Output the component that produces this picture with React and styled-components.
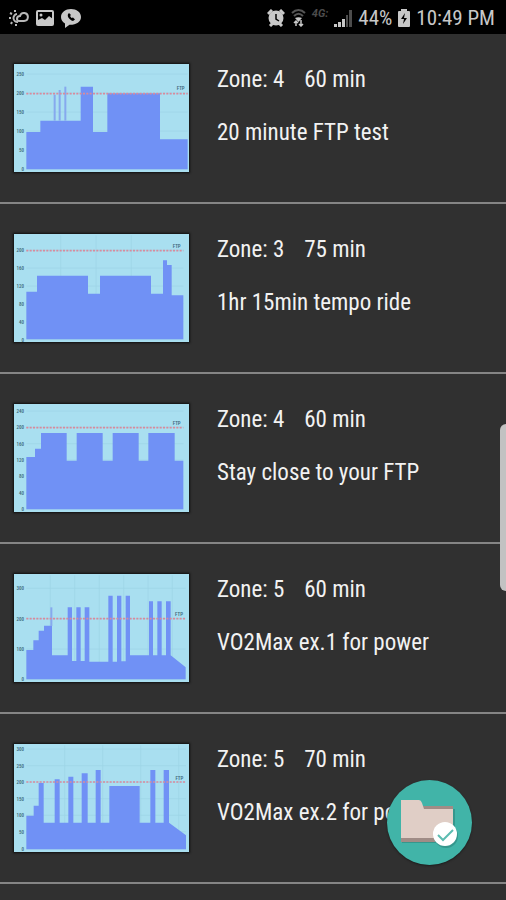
import React from 'react';
import styled, { createGlobalStyle } from "styled-components";

const GlobalStyle = createGlobalStyle`
    *, *::before, *::after {
        box-sizing: border-box;
    }
    body {
        margin: 0;
        background-color: #303030;
        color: #f2f2f2;
        font-family: "Roboto Condensed", Roboto, "Liberation Sans", sans-serif;
    }
`;

const Screen = styled.div`
    height: 100vh;
    display: flex;
    flex-direction: column;
    overflow: hidden;
`;

const StatusBar = styled.header`
    height: 34px;
    flex: none;
    display: flex;
    justify-content: space-between;
    align-items: center;
    padding: 2px 11px 0 9px;
    background-color: #000;
    color: #c8c8c8;
    font-size: 21px;
    line-height: 24px;
`;

const StatusGroup = styled.div`
    display: flex;
    align-items: center;
    gap: ${(props) => props.$gap}px;
`;

const StatusText = styled.span`
    white-space: nowrap;
`;

const StatusIcon = styled.svg`
    display: block;
    flex: none;
`;

const ListArea = styled.main`
    flex: 1;
    min-height: 0;
    position: relative;
`;

const WorkoutList = styled.ul`
    height: 100%;
    margin: 0;
    padding: 0;
    list-style: none;
    overflow: hidden;
`;

const WorkoutRow = styled.li`
    height: 170px;
    display: flex;
    align-items: flex-start;
    gap: 28px;
    padding: 30px 14px 0;
    border-bottom: 2px solid #858585;
`;

const Thumbnail = styled.svg`
    display: block;
    flex: none;
    width: 175px;
    height: 108px;
    background-color: #a9dff0;
    box-shadow: 0 0 2px 1px #101010;
`;

const ChartLabel = styled.text`
    font-size: 15px;
    font-weight: 500;
    fill: #3c6678;
    text-anchor: end;
    dominant-baseline: central;
`;

const Details = styled.div`
    min-width: 0;
    padding-top: 1px;
    font-size: 23px;
    line-height: 29px;
    white-space: nowrap;
`;

const Meta = styled.div`
    display: flex;
    gap: 20px;
`;

const Title = styled.p`
    margin: 24px 0 0;
`;

const ScrollThumb = styled.div`
    position: absolute;
    top: 45%;
    right: 0;
    width: 6px;
    height: 167px;
    border-radius: 6px 0 0 6px;
    background-color: #c2c2c2;
`;

const FolderButton = styled.button`
    position: fixed;
    right: 34px;
    bottom: 35px;
    width: 85px;
    height: 85px;
    padding: 0;
    border: 0;
    border-radius: 50%;
    background-color: #41b4a8;
    box-shadow: 0 1px 2px #1c1c1c;
    cursor: pointer;

    svg {
        display: block;
    }
`;

const BASE = 316;
const LEFT = 37;

// steps are [x, top] pairs, each one runs until the next x
const workouts = [
    {
        zone: 4,
        minutes: 60,
        title: "20 minute FTP test",
        steps: [[37, 204], [79, 170], [200, 68], [237, 204], [280, 88], [438, 226]],
        thin: [[119, 92, 78], [134, 78, 92], [151, 68, 102]],
        end: [521, 226],
        ftp: 89,
        ftpLabel: [512, 72],
        axis: [[250, 30], [200, 87], [150, 144], [100, 201], [50, 258], [0, 315]],
        columns: [],
    },
    {
        zone: 3,
        minutes: 75,
        title: "1hr 15min tempo ride",
        steps: [[37, 173], [69, 125], [222, 179], [258, 125], [411, 179], [447, 79], [459, 93], [473, 184]],
        end: [508, 184],
        ftp: 50,
        ftpLabel: [500, 35],
        axis: [[200, 49], [160, 102], [120, 156], [80, 209], [40, 263], [0, 317]],
        columns: [140, 246, 352],
    },
    {
        zone: 4,
        minutes: 60,
        title: "Stay close to your FTP",
        steps: [[37, 159], [63, 134], [81, 87], [158, 170], [188, 87], [266, 170], [296, 87], [374, 170], [403, 87], [482, 170]],
        end: [508, 170],
        ftp: 71,
        ftpLabel: [500, 58],
        axis: [[240, 21], [200, 70], [160, 119], [120, 168], [80, 217], [40, 266], [0, 315]],
        columns: [],
    },
    {
        zone: 5,
        minutes: 60,
        title: "VO2Max ex.1 for power",
        steps: [
            [37, 228], [58, 199], [74, 170], [90, 155], [114, 244],
            [161, 100], [174, 261], [187, 100], [200, 261], [212, 100], [226, 263],
            [283, 65], [296, 263], [309, 65], [322, 262], [335, 65], [348, 244],
            [405, 82], [417, 244], [430, 82], [443, 244], [456, 82], [470, 244],
        ],
        thin: [[109, 100, 56]],
        end: [515, 280],
        ftp: 134,
        ftpLabel: [507, 119],
        axis: [[300, 43], [200, 134], [100, 225], [0, 316]],
        columns: [109, 182, 256, 329, 402, 475],
    },
    {
        zone: 5,
        minutes: 70,
        title: "VO2Max ex.2 for power",
        steps: [
            [37, 215], [59, 185], [74, 117], [89, 236], [122, 106], [137, 236],
            [163, 98], [178, 236], [203, 88], [221, 236], [245, 78], [260, 236],
            [286, 126], [377, 236], [409, 78], [424, 236], [449, 78], [465, 236],
        ],
        end: [516, 274],
        ftp: 114,
        ftpLabel: [508, 101],
        axis: [[300, 15], [250, 65], [200, 114], [150, 164], [100, 214], [50, 263], [0, 315]],
        columns: [152, 266, 380, 494],
    },
];

const areaPath = (steps, end) => {
    let d = `M${LEFT} ${BASE}`;
    steps.forEach(([x, top], i) => {
        d += ` H${x} V${top}`;
        if (i === steps.length - 1) {
            d += ` L${end[0]} ${end[1]}`;
        }
    });
    return `${d} V${BASE} Z`;
};

const PowerChart = ({ workout }) => {
    const { steps, thin = [], end, ftp, ftpLabel, axis, columns, title } = workout;
    return (
        <Thumbnail viewBox="0 0 525 324" preserveAspectRatio="none" role="img" aria-label={title}>
            {axis.map(([value, y]) => (
                <line key={value} x1={LEFT} x2={end[0]} y1={y} y2={y} stroke="#9dd3e6" strokeWidth="2" />
            ))}
            {columns.map((x) => (
                <line key={x} x1={x} x2={x} y1="4" y2={BASE} stroke="#9dd3e6" strokeWidth="2" />
            ))}
            <path d={areaPath(steps, end)} fill="#7091f5" />
            {thin.map(([x, y, height]) => (
                <rect key={x} x={x} y={y} width="6" height={height} fill="#86a9ee" />
            ))}
            <line x1={LEFT} x2={end[0]} y1={ftp} y2={ftp} stroke="#d98a9c" strokeWidth="5" strokeDasharray="6 4" />
            {axis.map(([value, y]) => (
                <ChartLabel key={value} x="30" y={y}>{value}</ChartLabel>
            ))}
            <ChartLabel x={ftpLabel[0]} y={ftpLabel[1]}>FTP</ChartLabel>
        </Thumbnail>
    );
};

const WeatherIcon = () => (
    <StatusIcon width="20" height="18" viewBox="0 0 20 18" fill="none" stroke="#b8b8b8" strokeWidth="2">
        <path d="M8 5a4 4 0 1 0 1 8" />
        <path d="M10 12h5a4 4 0 1 0-4-5 3 3 0 0 0-3 3c0 1 1 2 2 2Z" />
        <path d="M6 1v2M1 4l2 1M0 9h2M2 15l1-2M7 17v-2" />
    </StatusIcon>
);

const PictureIcon = () => (
    <StatusIcon width="18" height="16" viewBox="0 0 18 16">
        <rect x="1" y="1" width="16" height="14" rx="1" fill="none" stroke="#c8c8c8" strokeWidth="2" />
        <path d="M2 14v-4l4-2 3 2 4-4 4 3v5Z" fill="#c8c8c8" />
        <circle cx="5" cy="5" r="1.5" fill="#c8c8c8" />
    </StatusIcon>
);

const CallBubbleIcon = () => (
    <StatusIcon width="20" height="19" viewBox="0 0 20 19">
        <path d="M10 0C4.500 0 0 3.500 0 8c0 3 1.500 5 4 6.500L4 19l4.500-3.200C15 16 20 13 20 8s-4.500-8-10-8Z" fill="#c8c8c8" />
        <path d="M8 4C5 6 8 11 12 12l2-1.500-2-2-1.500.5-1.500-2L10 6Z" fill="#000" />
    </StatusIcon>
);

const AlarmIcon = () => (
    <StatusIcon width="18" height="18" viewBox="0 0 18 18">
        <circle cx="9" cy="9" r="7.500" fill="#c8c8c8" />
        <path d="M1 5 5 1M17 5l-4-4M3 17l3-3M15 17l-3-3" stroke="#c8c8c8" strokeWidth="3" />
        <path d="M9 5v5l3 2" fill="none" stroke="#000" strokeWidth="1.500" />
    </StatusIcon>
);

const WifiIcon = () => (
    <StatusIcon width="15" height="18" viewBox="0 0 15 18" fill="none">
        <path d="M1 4c4-4 9-4 13 0M3 7c3-3 6-3 9 0" stroke="#555" strokeWidth="2" />
        <path d="M4 9c2-1 5-1 7 0l-3.500 4Z" fill="#c8c8c8" />
        <path d="M5 17v-5M3 14l2-2 2 2M10 11v6M8 15l2 2 2-2" stroke="#c8c8c8" strokeWidth="1.500" />
    </StatusIcon>
);

const LteLabel = styled.span`
    align-self: flex-start;
    color: #4c4c4c;
    font-family: Roboto, sans-serif;
    font-size: 11px;
    font-style: italic;
    font-weight: 700;
    line-height: 16px;
`;

const SignalIcon = () => (
    <StatusIcon width="18" height="17" viewBox="0 0 18 17">
        <path d="M0 14h3v3H0ZM4 12h3v5H4ZM8 9h3v8H8Z" fill="#c8c8c8" />
        <path d="M12 5h2v12h-2ZM15 0h3v17h-3Z" fill="#4c4c4c" />
    </StatusIcon>
);

const BatteryIcon = () => (
    <StatusIcon width="12" height="18" viewBox="0 0 12 18">
        <path d="M3 0h6v2h2q1 0 1 1v14q0 1-1 1H1q-1 0-1-1V3q0-1 1-1h2Z" fill="#c8c8c8" />
        <path d="M7 4 3 10h3l-1 5 4-6H6Z" fill="#000" />
    </StatusIcon>
);

const FolderIcon = () => (
    <svg width="85" height="85" viewBox="0 0 85 85" aria-hidden="true">
        <path d="M15 63h53V29h-2v32H15Z" fill="#35978d" />
        <path d="M34 26h32v36H14V56Z" fill="#a08c86" />
        <path d="M14 20h18q2 0 3 3l2 6h29v29H14Z" fill="#e0cec6" />
        <circle cx="59" cy="56" r="12" fill="#35978d" />
        <circle cx="58" cy="54" r="12" fill="#fff" />
        <path d="m51 55 5 5 10-10" fill="none" stroke="#5cbcb1" strokeWidth="2" />
    </svg>
);

const App = () => {
    return (
        <Screen>
            <GlobalStyle />
            <StatusBar>
                <StatusGroup $gap={7}>
                    <WeatherIcon />
                    <PictureIcon />
                    <CallBubbleIcon />
                </StatusGroup>
                <StatusGroup $gap={6}>
                    <AlarmIcon />
                    <WifiIcon />
                    <LteLabel>4G:</LteLabel>
                    <SignalIcon />
                    <StatusText>44%</StatusText>
                    <BatteryIcon />
                    <StatusText>10:49 PM</StatusText>
                </StatusGroup>
            </StatusBar>
            <ListArea>
                <WorkoutList>
                    {workouts.map((workout) => (
                        <WorkoutRow key={workout.title}>
                            <PowerChart workout={workout} />
                            <Details>
                                <Meta>
                                    <span>Zone: {workout.zone}</span>
                                    <span>{workout.minutes} min</span>
                                </Meta>
                                <Title>{workout.title}</Title>
                            </Details>
                        </WorkoutRow>
                    ))}
                </WorkoutList>
                <ScrollThumb />
            </ListArea>
            <FolderButton type="button" aria-label="Open saved workouts">
                <FolderIcon />
            </FolderButton>
        </Screen>
    )
}

export default App;
